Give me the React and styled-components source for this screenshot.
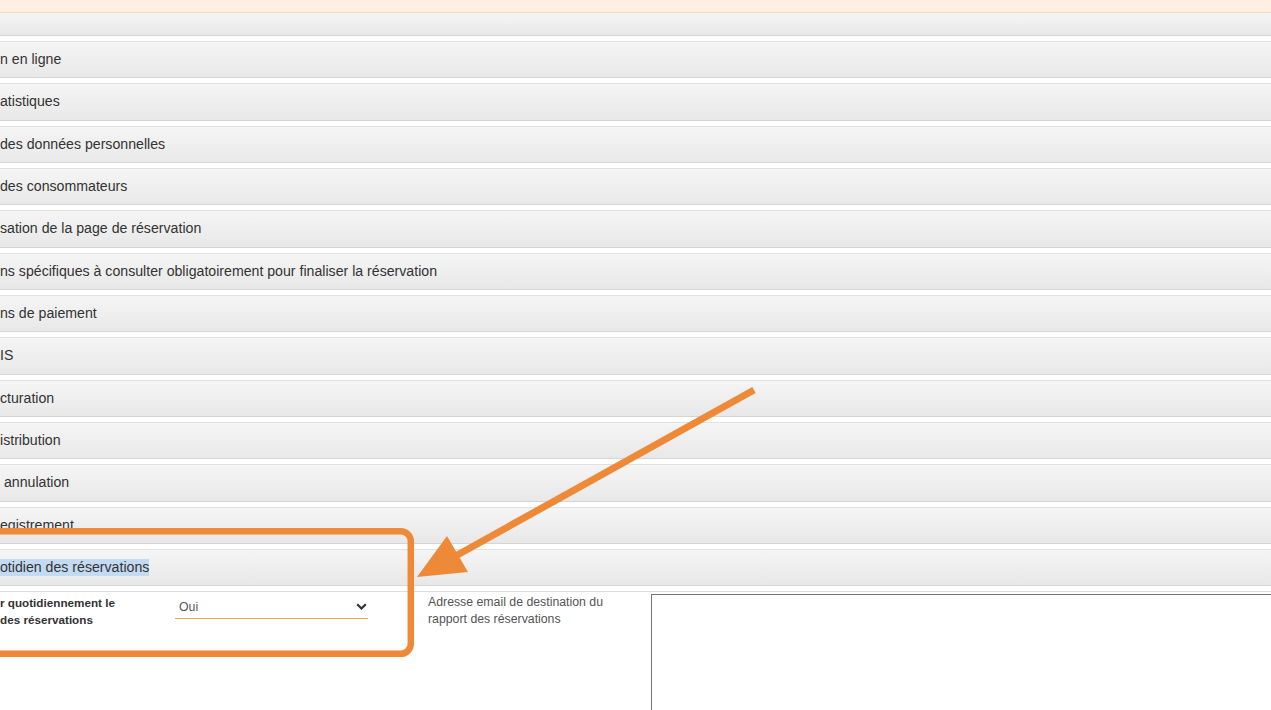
import React from 'react';
import styled, { createGlobalStyle } from 'styled-components';

const GlobalStyle = createGlobalStyle`
  html, body {
    margin: 0;
    padding: 0;
    background: #fff;
    overflow: hidden;
  }
  body {
    font-family: "Liberation Sans", Arial, sans-serif;
  }
`;

const Page = styled.div`
  position: relative;
  width: 1271px;
  height: 710px;
  overflow: hidden;
  background: #fff;
`;

const NoticeBand = styled.div`
  height: 12px;
  background: #fdf0e2;
  border-bottom: 1px solid #f1dec2;
`;

const Accordion = styled.div`
  display: flex;
  flex-direction: column;
`;

const Header = styled.div`
  box-sizing: border-box;
  height: ${p => (p.$partial ? '23px' : '37.33px')};
  margin-top: ${p => (p.$partial ? '0' : '5px')};
  display: flex;
  align-items: center;
  padding-bottom: 1px;
  background: linear-gradient(#f5f5f5, #e8e8e8);
  border-top: ${p => (p.$partial ? 'none' : '1px solid #e1e1e1')};
  border-bottom: 1px solid #d5d5d5;
  color: #333;
  font-size: 14.15px;
  white-space: pre;
`;

const Selected = styled.span`
  background: #c3daf3;
  line-height: 17px;
`;

const Panel = styled.div`
  margin-top: 4.7px;
  border-top: 1px solid #dddddd;
  padding-top: 2px;
  display: flex;
  align-items: flex-start;
`;

const FieldLabel = styled.div`
  box-sizing: border-box;
  flex-shrink: 0;
  width: ${p => p.$width}px;
  margin-left: ${p => p.$offset || 0}px;
  font-size: ${p => (p.$bold ? '11.7px' : '12.3px')};
  line-height: 17px;
  font-weight: ${p => (p.$bold ? 700 : 400)};
  color: ${p => (p.$bold ? '#333' : '#555')};
  white-space: nowrap;
`;

const SelectBox = styled.div`
  box-sizing: border-box;
  flex-shrink: 0;
  width: 193px;
  height: 25px;
  padding: 5px 1px 0 4px;
  display: flex;
  justify-content: space-between;
  align-items: flex-start;
  border-bottom: 1px solid #e3a858;
  font-size: 12.3px;
  line-height: 17px;
  color: #555;
`;

const Chevron = styled.svg`
  margin-top: 4px;
`;

const EmailArea = styled.textarea`
  box-sizing: border-box;
  flex-shrink: 0;
  width: 700px;
  height: 200px;
  margin: 0;
  border: 1px solid #777;
  border-radius: 0;
  resize: none;
  font-family: inherit;
`;

const Annotation = styled.svg`
  position: absolute;
  left: 0;
  top: 0;
  pointer-events: none;
`;

const sections = [
  'n en ligne',
  'atistiques',
  'des données personnelles',
  'des consommateurs',
  'sation de la page de réservation',
  'ns spécifiques à consulter obligatoirement pour finaliser la réservation',
  'ns de paiement',
  'IS',
  'cturation',
  'istribution',
  ' annulation',
  'egistrement',
];

export default function App() {
  return (
    <Page>
      <GlobalStyle />
      <NoticeBand />
      <Accordion>
        <Header $partial />
        {sections.map(label => (
          <Header key={label}>{label}</Header>
        ))}
        <Header>
          <Selected>otidien des réservations</Selected>
        </Header>
        <Panel>
          <FieldLabel $bold $width={175}>
            r quotidiennement le
            <br />
            des réservations
          </FieldLabel>
          <SelectBox>
            <span>Oui</span>
            <Chevron width="11" height="7" viewBox="0 0 11 7">
              <path d="M1.2 1.2l4.3 4.3 4.3-4.3" fill="none" stroke="#333" strokeWidth="2.2" />
            </Chevron>
          </SelectBox>
          <FieldLabel $width={223} $offset={60}>
            Adresse email de destination du
            <br />
            rapport des réservations
          </FieldLabel>
          <EmailArea />
        </Panel>
      </Accordion>
      <Annotation width="1271" height="710" viewBox="0 0 1271 710">
        <rect x="-30" y="531.3" width="440.8" height="122.5" rx="10" fill="none" stroke="#ee8a37" strokeWidth="6.5" />
        <line x1="754" y1="390" x2="452" y2="558" stroke="#ee8a37" strokeWidth="7" />
        <polygon points="417,577 447,536 468,572" fill="#ee8a37" />
      </Annotation>
    </Page>
  );
}
